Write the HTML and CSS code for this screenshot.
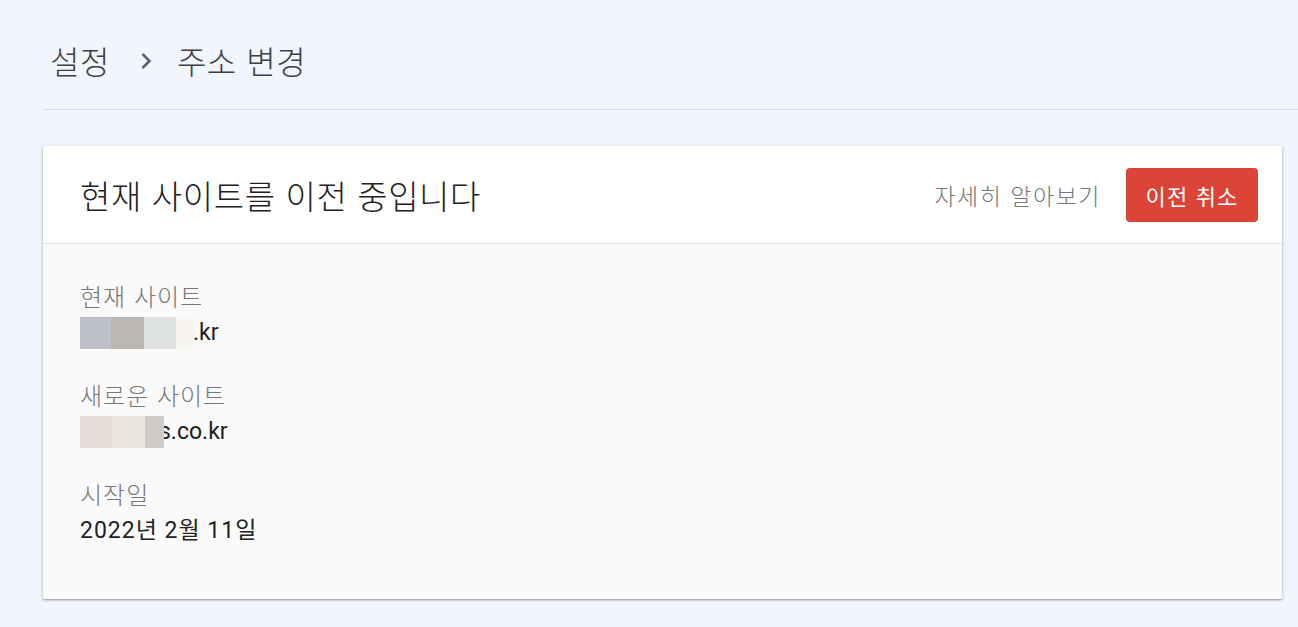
FILE: index.html
```html
<!DOCTYPE html>
<html lang="ko">
<head>
<meta charset="utf-8">
<title>주소 변경</title>
<link rel="stylesheet" href="styles.css">
</head>
<body>
<div class="page">
  <header class="crumbs">
    <span class="crumb">설정</span>
    <svg class="chev" width="12" height="18" viewBox="0 0 12 18"><path d="M2.5 2 L9.5 9 L2.5 16" fill="none" stroke="#5f6368" stroke-width="2.6"/></svg>
    <span class="crumb">주소 변경</span>
  </header>
  <section class="card">
    <div class="card-head">
      <h1 class="title">현재 사이트를 이전 중입니다</h1>
      <div class="actions">
        <a class="learn">자세히 알아보기</a>
        <button class="cancel">이전 취소</button>
      </div>
    </div>
    <div class="card-body">
      <div class="field">
        <div class="label">현재 사이트</div>
        <div class="value"><span class="blur"><i class="b1"></i><i class="b2"></i><i class="b3"></i><i class="b4"></i></span>.kr</div>
      </div>
      <div class="field">
        <div class="label">새로운 사이트</div>
        <div class="value"><span class="blur over"><i class="n1"></i><i class="n2"></i><i class="n3"></i></span><span class="tail">s.co.kr</span></div>
      </div>
      <div class="field">
        <div class="label">시작일</div>
        <div class="value date">2022년 2월 11일</div>
      </div>
    </div>
  </section>
</div>
</body>
</html>
```
FILE: styles.css
```css
* { box-sizing: border-box; }
html, body { margin: 0; padding: 0; }
body {
  background: #f1f5fd;
  font-family: Roboto, "Noto Sans CJK KR", sans-serif;
  color: #202124;
  width: 1298px;
  height: 627px;
  overflow: hidden;
}
.page { padding-left: 43px; }
.crumbs {
  height: 110px;
  border-bottom: 1px solid #dadce0;
  display: flex;
  align-items: center;
  padding-left: 7px;
  padding-top: 10px;
}
.crumb {
  font-size: 32px;
  font-weight: 300;
  color: #3c4043;
  font-family: "Noto Sans CJK KR", sans-serif;
  letter-spacing: 0.5px;
}
.chev { margin: 2px 25px 0 30px; }
.card {
  margin-top: 36px;
  width: 1239px;
  background: #fafafa;
  box-shadow: 0 1px 3px rgba(0,0,0,.3), 0 1px 1px rgba(0,0,0,.1);
}
.card-head {
  height: 98px;
  background: #fff;
  border-bottom: 1px solid #e0e0e0;
  display: flex;
  align-items: center;
  justify-content: space-between;
  padding: 0 24px 0 37px;
}
.title {
  margin: 0;
  font-weight: 300;
  font-size: 33px;
  color: #212121;
  font-family: "Noto Sans CJK KR", sans-serif;
  letter-spacing: 0.6px;
}
.actions { display: flex; align-items: center; gap: 25px; }
.learn {
  font-size: 23px;
  font-weight: 300;
  color: #757575;
  font-family: "Noto Sans CJK KR", sans-serif;
  letter-spacing: 1.5px;
}
.cancel {
  background: #db4437;
  color: #fff;
  border: 0;
  border-radius: 4px;
  height: 54px;
  width: 132px;
  padding: 0;
  font-size: 22px;
  font-family: "Noto Sans CJK KR", sans-serif;
  letter-spacing: 1.2px;
}
.card-body { padding: 37px 37px 52px; }
.field { margin-bottom: 31px; }
.field:last-child { margin-bottom: 0; }
.label {
  font-size: 24px;
  font-weight: 300;
  color: #757575;
  font-family: "Noto Sans CJK KR", sans-serif;
  line-height: 30px;
  letter-spacing: 1px;
}
.value {
  font-size: 23px;
  color: #212121;
  line-height: 32px;
  margin-top: 6px;
  display: flex;
  align-items: center;
  height: 32px;
}
.date { letter-spacing: 1px; }
.blur { display: inline-flex; height: 32px; }
.blur i { display: block; height: 32px; }
.b1 { width: 31px; background: #bfc1c8; }
.b2 { width: 33px; background: #bdb7b4; }
.b3 { width: 32px; background: #dfe3df; }
.b4 { width: 17px; background: #f7f3ee; }
.n1 { width: 32px; background: #e8ddd6; }
.n2 { width: 33px; background: #ebe5e0; }
.n3 { width: 19px; background: #cfcac8; }
.over { position: relative; z-index: 1; }
.tail { margin-left: -5px; }
```
